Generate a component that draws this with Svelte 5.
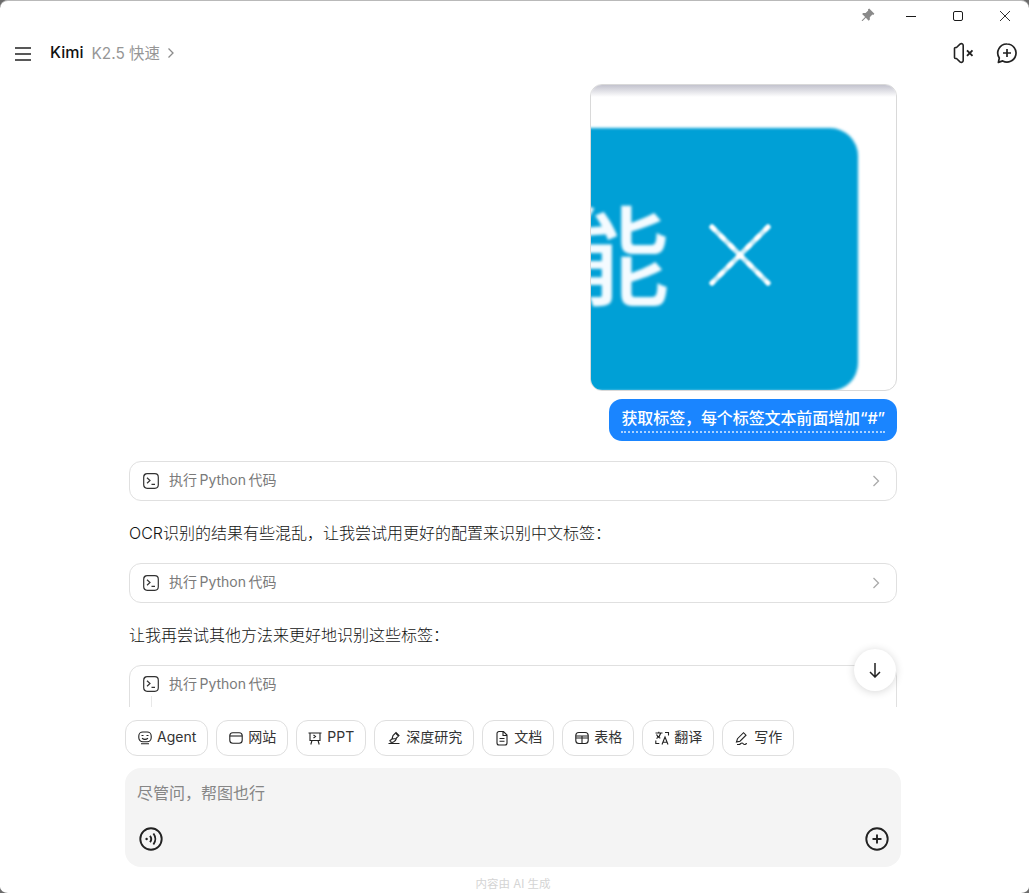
<script>
  const tools = ['Agent', '网站', 'PPT', '深度研究', '文档', '表格', '翻译', '写作'];
</script>

<div class="window">
  <div class="titlebar">
    <svg class="pin" viewBox="0 0 16 16" width="16" height="16"><path d="M9.200 1.600l5.200 5.200-1.100 1.100-.9-.3-2.600 2.600.1 2.400-1.200 1.100-2.900-3-3.200 3.200-.9.2.2-.9 3.200-3.200-3-2.900 1.100-1.200 2.400.1 2.600-2.600-.3-.9z" fill="#8a8a8a"/></svg>
    <div class="winbtn"><svg viewBox="0 0 12 12" width="12" height="12"><path d="M1 6.500h10" stroke="#1a1a1a" fill="none"/></svg></div>
    <div class="winbtn"><svg viewBox="0 0 12 12" width="12" height="12"><rect x="1.500" y="1.500" width="9" height="9" rx="1.500" stroke="#1a1a1a" fill="none"/></svg></div>
    <div class="winbtn"><svg viewBox="0 0 12 12" width="12" height="12"><path d="M1 1l10 10M11 1L1 11" stroke="#1a1a1a" fill="none" stroke-width="0.900"/></svg></div>
  </div>

  <header class="header">
    <svg class="menu" viewBox="0 0 16 14" width="16" height="14"><path d="M0 1h16M0 7h16M0 13h16" stroke="#222" stroke-width="1.700" fill="none"/></svg>
    <span class="brand">Kimi</span>
    <span class="model">K2.5 快速</span>
    <svg class="chev-head" viewBox="0 0 8 12" width="8" height="12"><path d="M1.500 1.500L6 6l-4.500 4.500" stroke="#8c8c8c" stroke-width="1.300" fill="none"/></svg>
    <div class="spacer"></div>
    <svg class="mute" viewBox="0 0 22 22" width="22" height="22"><path d="M7 2.200c1.400-1.100 3.200-.6 3.200 1.200v15.200c0 1.800-1.800 2.300-3.200 1.200L3.500 16.500H2.500a1 1 0 0 1-1-1V6.500a1 1 0 0 1 1-1h1z" fill="none" stroke="#222" stroke-width="1.600" stroke-linejoin="round"/><path d="M14 8.300l5.500 5.500M19.500 8.300L14 13.800" stroke="#222" stroke-width="1.900" fill="none"/></svg>
    <svg class="newchat" viewBox="0 0 22 22" width="22" height="22"><path d="M11 2a9 9 0 1 1-4.300 16.900L2.400 20.400l.9-4.400A9 9 0 0 1 11 2z" fill="none" stroke="#222" stroke-width="1.700" stroke-linejoin="round"/><path d="M11 7v8M7 11h8" stroke="#222" stroke-width="1.700"/></svg>
  </header>

  <main class="scroll">
    <div class="column">
      <div class="image-row">
        <div class="shot">
          <div class="shot-top"></div>
          <div class="shot-chip"></div>
          <span class="shot-text">能</span>
          <svg class="shot-x" viewBox="0 0 66 66" width="66" height="66"><path d="M5 5l56 56M61 5L5 61" stroke="#cfeef8" stroke-width="5" stroke-linecap="round" fill="none"/><path d="M5 5l56 56M61 5L5 61" stroke="#fff" stroke-width="5" stroke-linecap="round" stroke-dasharray="3 10" fill="none"/></svg>
        </div>
      </div>
      <div class="bubble-row">
        <div class="bubble"><span class="bubble-text">获取标签&#xFF0C;每个标签文本前面增加&#x201C;#&#x201D;</span></div>
      </div>

      <div class="tool first">
        <svg viewBox="0 0 16 16" width="16" height="16"><rect x="0.700" y="0.700" width="14.600" height="14.600" rx="3.500" fill="none" stroke="#333" stroke-width="1.200"/><path d="M4 4.800l3 2.700-3 2.700M8.500 11.300h3.500" fill="none" stroke="#333" stroke-width="1.200"/></svg>
        <span>执行 Python 代码</span>
        <svg class="chev" viewBox="0 0 8 12" width="8" height="12"><path d="M1.500 1L6.500 6l-5 5" stroke="#aaa" stroke-width="1.300" fill="none"/></svg>
      </div>
      <p class="para">OCR识别的结果有些混乱&#xFF0C;让我尝试用更好的配置来识别中文标签&#xFF1A;</p>
      <div class="tool">
        <svg viewBox="0 0 16 16" width="16" height="16"><rect x="0.700" y="0.700" width="14.600" height="14.600" rx="3.500" fill="none" stroke="#333" stroke-width="1.200"/><path d="M4 4.800l3 2.700-3 2.700M8.500 11.300h3.500" fill="none" stroke="#333" stroke-width="1.200"/></svg>
        <span>执行 Python 代码</span>
        <svg class="chev" viewBox="0 0 8 12" width="8" height="12"><path d="M1.500 1L6.500 6l-5 5" stroke="#aaa" stroke-width="1.300" fill="none"/></svg>
      </div>
      <p class="para">让我再尝试其他方法来更好地识别这些标签&#xFF1A;</p>
      <div class="tool open">
        <svg viewBox="0 0 16 16" width="16" height="16"><rect x="0.700" y="0.700" width="14.600" height="14.600" rx="3.500" fill="none" stroke="#333" stroke-width="1.200"/><path d="M4 4.800l3 2.700-3 2.700M8.500 11.300h3.500" fill="none" stroke="#333" stroke-width="1.200"/></svg>
        <span>执行 Python 代码</span>
        <i class="rail"></i>
      </div>
    </div>
    <button class="down" aria-label="滚动到底部">
      <svg viewBox="0 0 14 16" width="14" height="16"><path d="M7 1v14M2 10l5 5 5-5" stroke="#222" stroke-width="1.500" fill="none"/></svg>
    </button>
  </main>

  <div class="tools">
    {#each tools as t, i}
      <div class="chip" class:narrow={t === 'PPT'}>
        <svg viewBox="0 0 16 16" width="16" height="16" fill="none" stroke="#222" stroke-width="1.100">
          {#if i === 0}
            <rect x="1.800" y="2" width="12.400" height="9.800" rx="4"/><path d="M4.500 5.500h2M9.500 5.500h2M5 8.300c1.800 1.300 4.200 1.300 6 0M4 13.800h8" />
          {:else if i === 1}
            <rect x="1.800" y="2.800" width="12.400" height="10.400" rx="3"/><path d="M1.800 6h12.400"/>
          {:else if i === 2}
            <path d="M1.500 3h13M3 3v7.500h10V3M6.500 5l2 1.500-2 1.500M5 10.500L3.800 14.500M11 10.500l1.200 4"/>
          {:else if i === 3}
            <path d="M6 9l1-3.500 3-3 3 3-3 3zM10 3.500l2.500 2.500M6 9l-2.500 2M2.500 13.500h11M4 11.500c2 1.600 5 1 6.500-3"/>
          {:else if i === 4}
            <path d="M3 3.500a2 2 0 0 1 2-2h4.500L13 5v8a2 2 0 0 1-2 2H5a2 2 0 0 1-2-2zM5.500 8.500h5M5.500 11.300h5M9 2v3.500h3.500"/>
          {:else if i === 5}
            <rect x="1.800" y="2.500" width="12.400" height="11" rx="3"/><path d="M1.800 8h12.400M8 6v7.500M1.800 6h12.400"/>
          {:else if i === 6}
            <path d="M1.500 3h7M4.800 1.800V3M2.500 8.500c2-1 3.600-2.800 4.300-5.500M2.500 4.500c.6 1.600 2 3 3.800 3.800M8 14.500l3-7.500 3 7.500M9.100 12.300h3.800M1.800 10.500v3h3.500M14.500 5.500V2.500h-3.500"/>
          {:else}
            <path d="M2.500 12l1-3.300 6-6 2.500 2.500-6 6zM3 14.500h2c1.500 0 1.500-1.500 3-1.500s1 1.500 2.500 1.500 1-1 2.500-1"/>
          {/if}
        </svg>
        <span>{t}</span>
      </div>
    {/each}
  </div>

  <div class="composer">
    <div class="placeholder">尽管问&#xFF0C;帮图也行</div>
    <div class="composer-actions">
      <svg viewBox="0 0 24 24" width="24" height="24" fill="none" stroke="#222" stroke-width="1.900"><circle cx="12" cy="12" r="10.700"/><circle cx="7.600" cy="12" r="1.200" fill="#222" stroke="none"/><path d="M11 8.800c1.400 1.800 1.400 4.600 0 6.400M14.400 6.500c2.500 3.200 2.500 7.800 0 11"/></svg>
      <svg viewBox="0 0 24 24" width="24" height="24" fill="none" stroke="#222" stroke-width="1.900"><circle cx="12" cy="12" r="10.700"/><path d="M12 7.500v9M7.500 12h9"/></svg>
    </div>
  </div>

  <footer class="foot">内容由 AI 生成</footer>
</div>

<style>
  :global(html), :global(body) {
    margin: 0;
    background: #6b6b6b;
  }
  .window {
    height: 893px;
    box-sizing: border-box;
    border-top: 1px solid #b9b9b9;
    border-radius: 8px 8px 8px 8px / 8px 8px 6px 6px;
    background: #fff;
    display: flex;
    flex-direction: column;
    overflow: hidden;
    font-family: Inter, "Noto Sans CJK SC", sans-serif;
    color: #1f1f1f;
  }
  .titlebar {
    height: 30px;
    display: flex;
    align-items: center;
    justify-content: flex-end;
    padding-right: 1px;
    flex: none;
  }
  .pin {
    margin-right: 11px;
    margin-top: -3px;
  }
  .winbtn {
    width: 47px;
    height: 30px;
    display: flex;
    align-items: center;
    justify-content: center;
  }
  .winbtn svg {
    margin-top: -1px;
  }
  .header {
    height: 44px;
    flex: none;
    display: flex;
    align-items: center;
    padding: 0 11px 0 15px;
  }
  .menu {
    margin-right: 19px;
    margin-top: 1px;
  }
  .brand {
    font-size: 16px;
    font-weight: 500;
    color: #111;
    margin-right: 8px;
    margin-top: -2px;
  }
  .model {
    font-size: 15.400px;
    color: #969696;
    margin-right: 7px;
    margin-top: -2px;
  }
  .chev-head {
    margin-top: -1px;
  }
  .spacer {
    flex: 1;
  }
  .mute {
    margin-right: 21px;
    margin-left: 2px;
  }
  .scroll {
    flex: 1;
    min-height: 0;
    position: relative;
    overflow: hidden;
  }
  .column {
    width: 768px;
    margin-left: 129px;
    padding-top: 9px;
  }
  .image-row, .bubble-row {
    display: flex;
    justify-content: flex-end;
  }
  .shot {
    width: 307px;
    height: 307px;
    box-sizing: border-box;
    border: 1px solid #d9d9d9;
    border-radius: 12px;
    position: relative;
    overflow: hidden;
    background: #fff;
  }
  .shot-top {
    height: 12px;
    background: linear-gradient(#c3c3ce, #fff);
  }
  .shot-chip {
    position: absolute;
    left: -40px;
    top: 43px;
    width: 307px;
    bottom: -1px;
    background: #00a0d6;
    border-radius: 28px;
    filter: blur(1.800px);
  }
  .shot-text {
    position: absolute;
    left: -29px;
    top: 100px;
    font-size: 108px;
    line-height: 130px;
    font-weight: 500;
    font-family: "Noto Sans CJK SC", sans-serif;
    color: #f4fbff;
    filter: blur(1.700px);
  }
  .shot-x {
    position: absolute;
    left: 116px;
    top: 137px;
    filter: blur(1px);
  }
  .bubble-row {
    margin-top: 8px;
  }
  .bubble {
    height: 42px;
    box-sizing: border-box;
    padding: 0 12px;
    background: #1a85ff;
    border-radius: 13px;
    display: flex;
    align-items: center;
    color: #fff;
    font-size: 16px;
    font-weight: 500;
    letter-spacing: -0.1px;
    white-space: nowrap;
  }
  .bubble-text {
    border-bottom: 2px dotted #a9d2ff;
    line-height: 22px;
    padding-bottom: 2px;
  }
  .tool {
    height: 40px;
    box-sizing: border-box;
    border: 1px solid #e0e0e0;
    border-radius: 12px;
    display: flex;
    align-items: center;
    padding: 0 16px 0 13px;
    font-size: 14px;
    color: #7a7a7a;
    position: relative;
  }
  .tool.first {
    margin-top: 20px;
  }
  .tool span {
    margin-left: 10px;
    margin-top: -5px;
    flex: 1;
    word-spacing: -1.500px;
  }
  .tool svg {
    flex: none;
  }
  .tool.open {
    height: 60px;
    align-items: flex-start;
    padding-top: 10px;
  }
  .tool.open span {
    margin-top: -3px;
  }
  .rail {
    position: absolute;
    left: 21px;
    top: 30px;
    width: 1px;
    height: 30px;
    background: #e8e8e8;
  }
  .para {
    margin: 0;
    height: 62px;
    line-height: 64px;
    font-size: 16px;
    font-weight: 300;
    color: #111;
  }
  .down {
    position: absolute;
    left: 854px;
    top: 574px;
    width: 42px;
    height: 42px;
    padding: 0;
    border: 0;
    border-radius: 50%;
    background: #fff;
    box-shadow: 0 1px 8px rgba(0, 0, 0, 0.16);
    display: flex;
    align-items: center;
    justify-content: center;
  }
  .tools {
    flex: none;
    display: flex;
    gap: 8px;
    margin: 13px 0 0 125px;
  }
  .chip {
    height: 36px;
    box-sizing: border-box;
    border: 1px solid #dfdfdf;
    border-radius: 12px;
    padding: 0 11px;
    display: flex;
    align-items: center;
    gap: 4px;
    font-size: 14px;
    color: #333;
    white-space: nowrap;
  }
  .chip.narrow {
    padding: 0 11px 0 10px;
  }
  .chip span {
    margin-top: -4px;
  }
  .composer {
    flex: none;
    width: 776px;
    height: 99px;
    box-sizing: border-box;
    margin: 12px 0 0 125px;
    padding: 13px 12px 16px;
    background: #f4f4f4;
    border-radius: 16px;
    display: flex;
    flex-direction: column;
    justify-content: space-between;
  }
  .placeholder {
    font-size: 16px;
    line-height: 24px;
    color: #868686;
  }
  .composer-actions {
    display: flex;
    justify-content: space-between;
    padding: 0 0 0 2px;
  }
  .foot {
    flex: none;
    text-align: center;
    width: 776px;
    margin: 9px 0 0 125px;
    font-size: 11.500px;
    line-height: 17px;
    color: #d4d4d4;
  }
</style>
